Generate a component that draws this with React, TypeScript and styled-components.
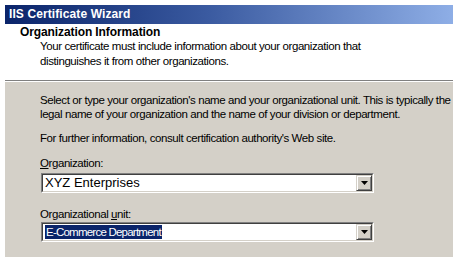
import React from "react";
import styled, { createGlobalStyle } from "styled-components";

const Global = createGlobalStyle`
  html, body { margin: 0; padding: 0; background: #ffffff; }
  body { font-family: "Liberation Sans", Arial, sans-serif; }
`;

const Dialog = styled.div`
  margin: 5px 0 0 5px;
  width: 448px;
  display: flex;
  flex-direction: column;
`;

const TitleBar = styled.div`
  height: 19px;
  line-height: 19px;
  padding-left: 4px;
  background: linear-gradient(to right, #0a246a 0%, #3a5aa0 45%, #8eaee6 100%);
  color: #ffffff;
  font-weight: bold;
  font-size: 12px;
  letter-spacing: 0.1px;
`;

const Header = styled.div`
  background: #ffffff;
  height: 57px;
  padding: 1px 0 0 15px;
  box-sizing: border-box;
  border-bottom: 1px solid #808080;
`;

const HeaderTitle = styled.div`
  font-weight: bold;
  font-size: 12px;
  line-height: 14px;
  letter-spacing: -0.1px;
  color: #000;
`;

const HeaderDesc = styled.div`
  padding-left: 20px;
  font-size: 11.5px;
  line-height: 15px;
  letter-spacing: -0.41px;
  color: #000;
`;

const Body = styled.div`
  background: #d4d0c8;
  border-top: 1px solid #ffffff;
  height: 176px;
  box-sizing: border-box;
  padding: 11px 0 0 35px;
  display: flex;
  flex-direction: column;
  align-items: flex-start;
`;

const Para = styled.div<{ $gap?: number }>`
  font-size: 11.5px;
  line-height: 14px;
  letter-spacing: -0.42px;
  color: #000;
  margin-top: ${(p) => p.$gap ?? 0}px;
  white-space: nowrap;
`;

const Label = styled(Para)`
  u { text-decoration: underline; }
`;

const Combo = styled.div<{ $gap?: number }>`
  margin: ${(p) => p.$gap ?? 0}px 0 0 1px;
  width: 333px;
  height: 20px;
  box-sizing: border-box;
  border-top: 1px solid #808080;
  border-left: 1px solid #808080;
  border-right: 1px solid #ffffff;
  border-bottom: 1px solid #ffffff;
  display: flex;
`;

const ComboInner = styled.div`
  flex: 1;
  display: flex;
  align-items: center;
  background: #ffffff;
  border-top: 1px solid #404040;
  border-left: 1px solid #404040;
  border-right: 1px solid #d4d0c8;
  border-bottom: 1px solid #d4d0c8;
  padding-left: 1px;
  overflow: hidden;
`;

const ComboText = styled.div`
  flex: 1;
  font-size: 13px;
  line-height: 16px;
  padding-left: 1px;
  color: #000;
  white-space: nowrap;
`;

const Selected = styled.span`
  display: inline-block;
  background: #0a246a;
  color: #ffffff;
  font-size: 11.5px;
  line-height: 14px;
  letter-spacing: -0.77px;
  padding: 0 1px 0 1px;
  white-space: nowrap;
`;

const DropButton = styled.div`
  width: 16px;
  height: 16px;
  box-sizing: border-box;
  background: #d4d0c8;
  border-top: 1px solid #d4d0c8;
  border-left: 1px solid #d4d0c8;
  border-right: 1px solid #404040;
  border-bottom: 1px solid #404040;
  box-shadow: inset 1px 1px 0 #ffffff, inset -1px -1px 0 #808080;
  display: flex;
  align-items: center;
  justify-content: center;
`;

const Arrow = () => (
  <svg width="7" height="4" viewBox="0 0 7 4">
    <path d="M0 0H7L3.5 4Z" fill="#000" />
  </svg>
);

export default function App() {
  return (
    <>
      <Global />
      <Dialog>
        <TitleBar>IIS Certificate Wizard</TitleBar>
        <Header>
          <HeaderTitle>Organization Information</HeaderTitle>
          <HeaderDesc>
            Your certificate must include information about your organization that
            <br />
            distinguishes it from other organizations.
          </HeaderDesc>
        </Header>
        <Body>
          <Para>
            Select or type your organization's name and your organizational unit. This is typically the
            <br />
            legal name of your organization and the name of your division or department.
          </Para>
          <Para $gap={10}>For further information, consult certification authority's Web site.</Para>
          <Label $gap={11}>
            <u>O</u>rganization:
          </Label>
          <Combo $gap={3}>
            <ComboInner>
              <ComboText>XYZ Enterprises</ComboText>
              <DropButton>
                <Arrow />
              </DropButton>
            </ComboInner>
          </Combo>
          <Label $gap={14}>
            Organizational <u>u</u>nit:
          </Label>
          <Combo $gap={1}>
            <ComboInner>
              <ComboText>
                <Selected>E-Commerce Department</Selected>
              </ComboText>
              <DropButton>
                <Arrow />
              </DropButton>
            </ComboInner>
          </Combo>
        </Body>
      </Dialog>
    </>
  );
}
